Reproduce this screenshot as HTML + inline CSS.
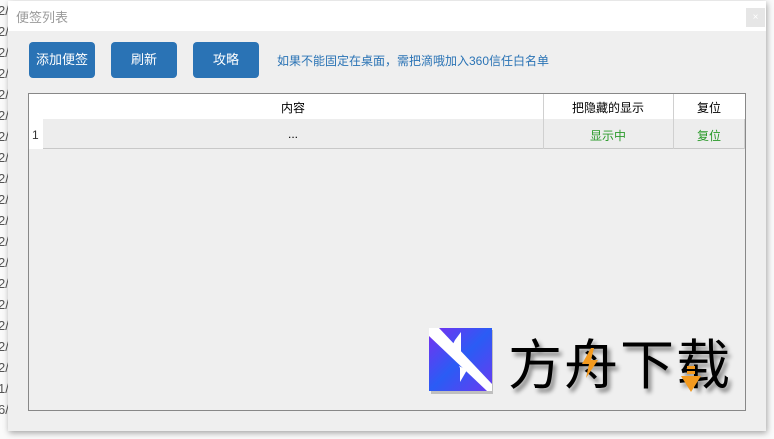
<!DOCTYPE html>
<html><head><meta charset="utf-8"><style>
*{margin:0;padding:0;box-sizing:border-box}
body{width:774px;height:439px;overflow:hidden;background:#fafafa;position:relative;font-family:"Liberation Sans","Noto Sans CJK SC",sans-serif;font-size:12px}
.bgtxt{position:absolute;left:-2px;color:#555;font-size:13px;line-height:21px;top:0}
.win{position:absolute;left:8px;top:1px;width:758px;height:430px;background:#efefef;box-shadow:1px 2px 6px rgba(0,0,0,.35)}
.title{height:30px;background:#fff;color:#9a9a9a;font-size:13px;padding:6px 8px}
.close{position:absolute;left:738px;top:7px;width:19px;height:19px;background:#e6e6e6;color:#fff;text-align:center;font-size:10px;line-height:19px}
.btn{position:absolute;top:41px;width:66px;height:36px;background:#2a73b5;border-radius:4px;color:#fff;font-size:13px;text-align:center;line-height:36px}
.link{position:absolute;left:269px;top:51px;color:#2a73b5;font-size:12px}
.tbl{position:absolute;left:20px;top:92px;width:718px;height:318px;border:1px solid #888;background:#efefef}
.hdr{position:absolute;left:14px;top:0;width:702px;height:25px;background:#fff}
.row{position:absolute;left:14px;top:25px;width:702px;height:30px;background:#ededed;border-bottom:1px solid #c8c8c8}
.num{position:absolute;left:0;top:0;width:14px;height:55px;background:#fff}
.cell{position:absolute;text-align:center;font-size:12px}
.vl{position:absolute;width:1px;background:#d0d0d0}
</style></head><body>
<div class="bgtxt">2/<br>2/<br>2/<br>2/<br>2/<br>2/<br>2/<br>2/<br>2/<br>2/<br>2/<br>2/<br>2/<br>2/<br>2/<br>2/<br>2/<br>2/<br>1/<br>6/</div>
<div class="win">
<div class="title">便签列表</div>
<div class="close">×</div>
<div class="btn" style="left:21px">添加便签</div>
<div class="btn" style="left:103px">刷新</div>
<div class="btn" style="left:185px">攻略</div>
<div class="link">如果不能固定在桌面，需把滴哦加入360信任白名单</div>
<div class="tbl">
<div class="hdr"></div><div class="row"></div><div class="num"></div>
<div class="vl" style="left:514px;top:0;height:55px"></div>
<div class="vl" style="left:644px;top:0;height:55px"></div>
<div class="vl" style="left:715px;top:25px;height:30px"></div>
<div class="cell" style="left:14px;width:500px;top:5px">内容</div>
<div class="cell" style="left:514px;width:130px;top:5px">把隐藏的显示</div>
<div class="cell" style="left:644px;width:72px;top:5px">复位</div>
<div class="cell" style="left:3px;top:34px;color:#333">1</div>
<div class="cell" style="left:14px;width:500px;top:33px">...</div>
<div class="cell" style="left:514px;width:130px;top:33px;color:#2a9a2a">显示中</div>
<div class="cell" style="left:644px;width:72px;top:33px;color:#2a9a2a">复位</div>
</div>
</div>
<svg style="position:absolute;left:429px;top:328px" width="64" height="66" viewBox="0 0 64 66">
<defs><linearGradient id="g" x1="0" y1="0" x2="1" y2="1"><stop offset="0" stop-color="#7a2ef0"/><stop offset="0.5" stop-color="#2a5cf5"/><stop offset="1" stop-color="#6a3af0"/></linearGradient></defs>
<rect x="2" y="2" width="62" height="64" fill="#777" opacity=".4"/>
<rect width="63" height="63" fill="url(#g)"/>
<polygon points="0,0 10,0 63,56 63,63 58,63 0,8" fill="#fff"/>
<polygon points="26,12 32,4 32,26 24,16" fill="#fff"/>
<polygon points="30,38 38,42 31,54 31,40" fill="#fff"/>
</svg>
<div style="position:absolute;left:508px;top:330px;font-size:54px;line-height:62px;letter-spacing:2px;color:#000;text-shadow:3px 4px 4px rgba(0,0,0,.45);font-family:'Noto Sans CJK SC',sans-serif">方舟下载</div>
<svg style="position:absolute;left:580px;top:348px" width="20" height="30"><polygon points="11,0 2,16 9,16 6,30 18,12 11,12 14,0" fill="#f39a1f"/></svg>
<svg style="position:absolute;left:681px;top:366px" width="20" height="28"><rect x="6" y="0" width="8" height="3" fill="#f39a1f"/><rect x="6" y="5" width="8" height="3" fill="#f39a1f"/><polygon points="0,10 20,10 10,26" fill="#f39a1f"/></svg>
</body></html>
